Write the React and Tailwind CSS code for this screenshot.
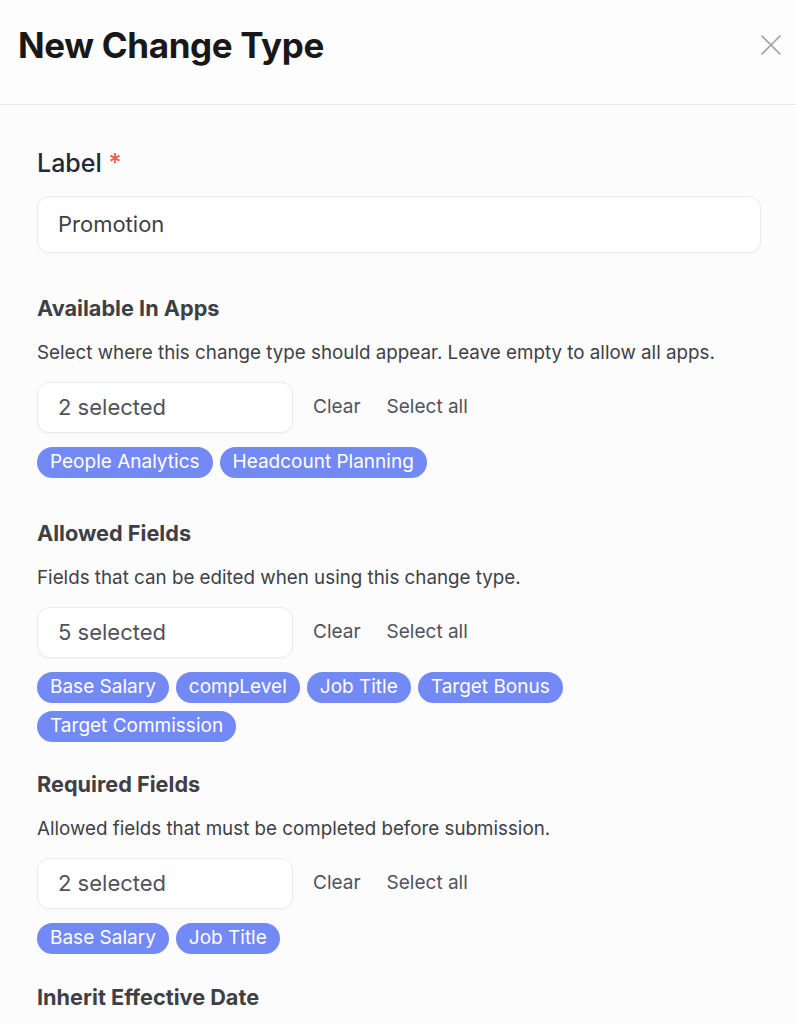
import React from "react";

const sections = [
  {
    title: "Available In Apps",
    hint: "Select where this change type should appear. Leave empty to allow all apps.",
    count: 2,
    chips: ["People Analytics", "Headcount Planning"],
    after: "mb-[41px]",
  },
  {
    title: "Allowed Fields",
    hint: "Fields that can be edited when using this change type.",
    count: 5,
    chips: ["Base Salary", "compLevel", "Job Title", "Target Bonus", "Target Commission"],
    after: "mb-[28px]",
  },
  {
    title: "Required Fields",
    hint: "Allowed fields that must be completed before submission.",
    count: 2,
    chips: ["Base Salary", "Job Title"],
    after: "mb-[29px]",
  },
];

const MultiSelect = ({ title, hint, count, chips, after }) => (
  <div className={after}>
    <h3 className="text-[21.7px] leading-[28px] font-bold text-[#3f3f46]">{title}</h3>
    <p className="mt-[19px] text-[18.8px] leading-[24px] text-[#3f3f46]">{hint}</p>
    <div className="mt-[17px] flex items-center">
      <div className="w-[256px] h-[51px] flex items-center px-[20px] bg-white border border-[#ebebeb] rounded-[12px] shadow-[0_1px_2px_rgba(0,0,0,0.04)] text-[22px] text-[#52525b]">
        {count} selected
      </div>
      <button className="ml-[20px] text-[19px] text-[#52525b]">Clear</button>
      <button className="ml-[26px] text-[19px] text-[#52525b]">Select all</button>
    </div>
    <div className="mt-[14px] flex flex-wrap gap-x-[7px] gap-y-[8px]">
      {chips.map((c) => (
        <span
          key={c}
          className="h-[31px] px-[13px] flex items-center rounded-full bg-[#7389f6] text-white text-[19px]"
        >
          {c}
        </span>
      ))}
    </div>
  </div>
);

export default function App() {
  return (
    <div className="min-h-screen bg-[#fcfcfc] font-['Inter',sans-serif]">
      <header className="h-[105px] bg-[#fdfdfd] border-b border-[#e8e8e8] flex items-start justify-between pl-[18px] pr-[14px] pt-[24px]">
        <h1 className="text-[35px] leading-[42px] font-bold text-[#18181b] tracking-[-0.01em]">New Change Type</h1>
        <button className="mt-[10px] text-[#9ca3af]" aria-label="Close">
          <svg width="22" height="22" viewBox="0 0 22 22" fill="none" stroke="currentColor" strokeWidth="1.7" strokeLinecap="round">
            <path d="M2 2L20 20M20 2L2 20" />
          </svg>
        </button>
      </header>

      <main className="px-[37px] pt-[42px] pb-[40px]">
        <label className="block text-[25px] leading-[32px] font-medium text-[#1f2937]">
          Label <span className="text-[#ef5b4c]">*</span>
        </label>
        <div className="mt-[17px] mb-[41px] h-[57px] w-[724px] flex items-center px-[20px] bg-white border border-[#ebebeb] rounded-[12px] shadow-[0_1px_2px_rgba(0,0,0,0.04)] text-[22px] text-[#3f3f46]">
          Promotion
        </div>

        {sections.map((s) => (
          <MultiSelect key={s.title} {...s} />
        ))}

        <h3 className="text-[21.7px] leading-[28px] font-bold text-[#3f3f46]">Inherit Effective Date</h3>
      </main>
    </div>
  );
}
